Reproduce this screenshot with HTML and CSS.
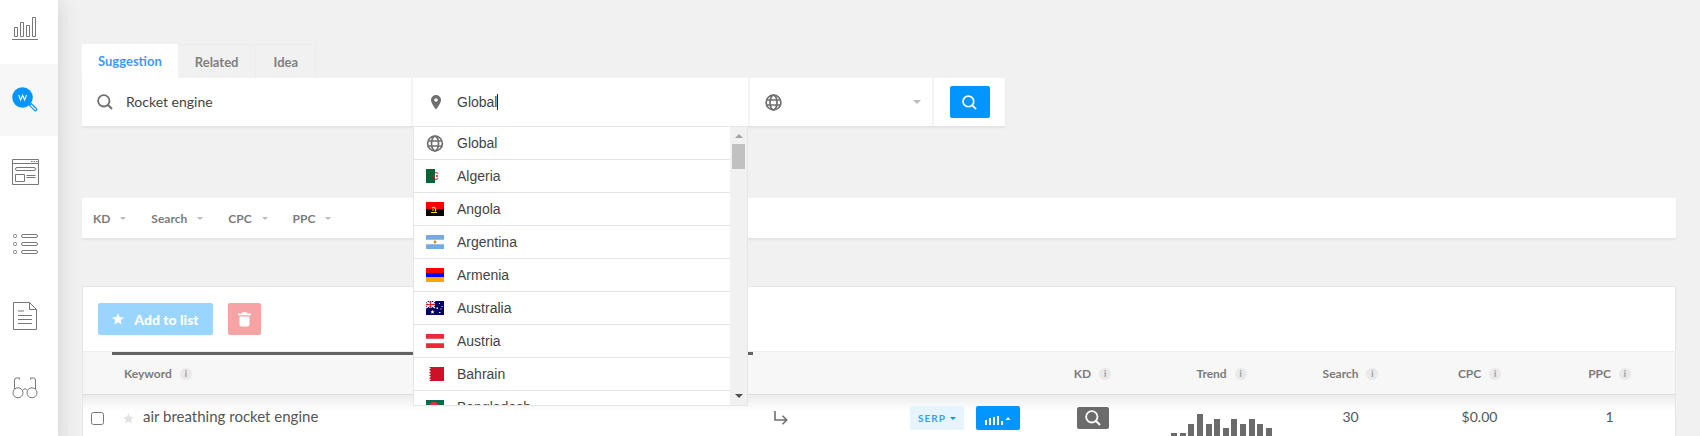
FILE: index.html
```html
<!DOCTYPE html>
<html lang="en">
<head>
  <meta charset="UTF-8">
  <meta name="viewport" content="width=device-width, initial-scale=1">
  <title>Keyword Finder</title>
  <link rel="stylesheet" href="styles.css">
</head>
<body>
  <svg class="defs" aria-hidden="true">
    <symbol id="magnifier" viewBox="0 0 16 16">
      <circle cx="6.8" cy="6.8" r="5.7" fill="none" stroke="currentColor" stroke-width="1.8"/>
      <path d="M10.8 10.8L15 15" stroke="currentColor" stroke-width="2"/>
    </symbol>
    <symbol id="globe" viewBox="0 0 17 17">
      <g fill="none" stroke="currentColor" stroke-width="1.7">
        <circle cx="8.5" cy="8.5" r="7.4"/>
        <ellipse cx="8.5" cy="8.5" rx="3.5" ry="7.4"/>
        <path d="M1.6 6h13.8M1.6 11h13.8"/>
      </g>
    </symbol>
    <symbol id="star" viewBox="0 0 12 12">
      <path d="M6 0l1.7 4 4.3.4-3.3 2.8 1 4.3L6 9.2l-3.7 2.3 1-4.3L0 4.4 4.3 4z" fill="currentColor"/>
    </symbol>
  </svg>

  <div class="app">
    <nav class="sidebar">
      <a class="nav-item" href="#" aria-label="Rank tracker">
        <svg width="26" height="26" viewBox="0 0 26 26" fill="none" stroke="#777">
          <path d="M0 24.5h26M2.5 12.500h3v9h-3zM8.500 7.500h3v14h-3zM14.500 10.500h3v11h-3zM20.500 2.500h3v19h-3z"/>
        </svg>
      </a>
      <a class="nav-item active" href="#" aria-label="Keyword finder">
        <svg width="26" height="26" viewBox="0 0 26 26">
          <path d="M17.500 18.300l1.800-1.800 5 5q.9.900 0 1.800t-1.800 0z" fill="none" stroke="#0095ff" stroke-width="1.200"/>
          <circle cx="10.500" cy="10.500" r="10.300" fill="#0095ff"/>
          <path d="M6.700 8l1.900 5 2-4.800 2 4.800 1.900-5" fill="none" stroke="#fff" stroke-width="1.100"/>
        </svg>
      </a>
      <a class="nav-item" href="#" aria-label="Web audit">
        <svg width="27" height="26" viewBox="0 0 27 26" fill="none" stroke="#777">
          <path d="M.5.5h26v25H.5zM.5 4.500h26M3.500 15.500h9v7h-9zM14.500 16.500h9M14.500 18.500h9"/>
          <rect x="3.500" y="8.500" width="20" height="3" rx="1.500"/>
          <path d="M19 2.500h1.500M21.500 2.500H23M24 2.500h1.500"/>
        </svg>
      </a>
      <a class="nav-item" href="#" aria-label="Keyword lists">
        <svg width="26" height="22" viewBox="0 0 26 22" fill="none" stroke="#777">
          <rect x="1.500" y="1.500" width="3" height="3" rx="1"/>
          <rect x="1.500" y="9.500" width="3" height="3" rx="1"/>
          <rect x="1.500" y="17.500" width="3" height="3" rx="1"/>
          <rect x="9.500" y="1.500" width="16" height="3" rx="1.500"/>
          <rect x="9.500" y="9.500" width="16" height="3" rx="1.500"/>
          <rect x="9.500" y="17.500" width="16" height="3" rx="1.500"/>
        </svg>
      </a>
      <a class="nav-item" href="#" aria-label="Reports">
        <svg width="26" height="28" viewBox="0 0 26 28" fill="none" stroke="#777">
          <path d="M1.500.5h16l7 7v20h-23zM17.500.5v7h7M6 9h6M6 13.500h14M6 17.500h14M6 21.500h14"/>
        </svg>
      </a>
      <a class="nav-item" href="#" aria-label="Competitors">
        <svg width="26" height="22" viewBox="0 0 26 22" fill="none" stroke="#777">
          <circle cx="6" cy="15.800" r="5"/>
          <circle cx="20" cy="15.800" r="5"/>
          <path d="M10.500 13.500q2.500-3.500 5 0M2.500 12V3q0-2 2-2h3v1.500M23.500 12V3q0-2-2-2h-3v1.500"/>
        </svg>
      </a>
    </nav>

    <main class="main">
      <div class="tabs">
        <button class="tab active">Suggestion</button>
        <button class="tab">Related</button>
        <button class="tab">Idea</button>
      </div>

      <form class="search-bar">
        <label class="field field-keyword">
          <svg class="icon" width="16" height="16"><use href="#magnifier"/></svg>
          <input type="text" value="Rocket engine" aria-label="Keyword">
        </label>
        <div class="field field-location">
          <label class="field-label">
            <svg class="icon" width="18" height="16" viewBox="0 0 18 16">
              <path d="M10 1a5 5 0 0 0-5 5c0 3.500 5 9.500 5 9.500s5-6 5-9.500a5 5 0 0 0-5-5zm0 3.200a1.800 1.800 0 1 1 0 3.600 1.800 1.800 0 0 1 0-3.600z" fill="#6f6f6f"/>
            </svg>
            <input type="text" value="Global" aria-label="Location">
          </label>
          <span class="caret"></span>
          <div class="dropdown">
            <ul class="countries">
              <li><svg class="globe" width="18" height="17"><use href="#globe"/></svg>Global</li>
              <li>
                <svg width="18" height="14"><path d="M0 0h9v14H0z" fill="#063"/><path d="M12.300 4.500a3.300 3.300 0 1 0 0 5" fill="none" stroke="#d21034"/><circle cx="11" cy="7" r="1" fill="#d21034"/></svg>
                Algeria
              </li>
              <li>
                <svg width="18" height="14"><path d="M0 0h18v7H0z" fill="#f00"/><path d="M0 7h18v7H0z"/><path d="M5 10.500h6M6 6a2.200 2.200 0 1 1 3 3.500M6 8h2" fill="none" stroke="#fd0" stroke-width="1.200"/></svg>
                Angola
              </li>
              <li>
                <svg width="18" height="14"><path d="M0 0h18v4.700H0zM0 9.300h18V14H0z" fill="#74acdf"/><circle cx="9" cy="7" r="1.400" fill="#c68a2c"/></svg>
                Argentina
              </li>
              <li>
                <svg width="18" height="14"><path d="M0 0h18v5H0z" fill="#f00"/><path d="M0 5h18v4H0z" fill="#00f"/><path d="M0 9h18v5H0z" fill="#ffa500"/></svg>
                Armenia
              </li>
              <li>
                <svg width="18" height="14"><path d="M0 0h18v14H0z" fill="#006"/><path d="M0 0l9 7M9 0L0 7" stroke="#fff" stroke-width="1.400"/><path d="M4.500 0v7M0 3.500h9" stroke="#fff" stroke-width="2.400"/><path d="M4.500 0v7M0 3.500h9" stroke="#d22" stroke-width="1.200"/><path d="M6.500 9l.7 1.200 1.300.3-1 .8.200 1.500-1.200-.7-1.200.7.200-1.500-1-.8 1.300-.3zM13 2h1v1h-1zM10.500 6.500h1.500V8h-1.500zM15.500 5h1v1h-1zM13 11h1.500v1H13zM14.500 7.500h1v1h-1z" fill="#fff"/></svg>
                Australia
              </li>
              <li>
                <svg width="18" height="14"><path d="M0 0h18v4.700H0zM0 9.300h18V14H0z" fill="#ed2939"/></svg>
                Austria
              </li>
              <li>
                <svg width="18" height="14"><path d="M18 0H3l2 1.400-2 1.400 2 1.400-2 1.400L5 7 3 8.400l2 1.400-2 1.400 2 1.400L3 14h15z" fill="#ce1126"/></svg>
                Bahrain
              </li>
              <li>
                <svg width="18" height="14"><path d="M0 0h18v14H0z" fill="#006a4e"/><circle cx="8" cy="7" r="5" fill="#f42a41"/></svg>
                Bangladesh
              </li>
            </ul>
            <div class="scrollbar">
              <span class="arrow-up"></span>
              <span class="thumb"></span>
              <span class="arrow-down"></span>
            </div>
          </div>
        </div>
        <label class="field field-language">
          <svg class="icon" width="17" height="17"><use href="#globe"/></svg>
          <select aria-label="Language"><option></option></select>
          <span class="chevron"></span>
        </label>
        <div class="field field-submit">
          <button class="btn-search" type="button" aria-label="Search">
            <svg width="15" height="15"><use href="#magnifier"/></svg>
          </button>
        </div>
      </form>

      <div class="filters">
        <button class="filter">KD <span class="chevron"></span></button>
        <button class="filter">Search <span class="chevron"></span></button>
        <button class="filter">CPC <span class="chevron"></span></button>
        <button class="filter">PPC <span class="chevron"></span></button>
      </div>

      <section class="panel">
        <div class="toolbar">
          <button class="btn-add"><svg width="12" height="12"><use href="#star"/></svg>Add to list</button>
          <button class="btn-delete" aria-label="Delete">
            <svg width="13" height="15" viewBox="0 0 13 15" fill="#fff"><path d="M0 1.500h3.500L4.500.3h4l1 1.200H13v1.700H0zM1.500 4.500h10v8.300q0 1.700-1.700 1.700H3.200q-1.700 0-1.700-1.700z"/></svg>
          </button>
        </div>
        <div class="results">
          <div class="progress"></div>
          <table>
            <thead>
              <tr>
                <th class="col-keyword">Keyword <i class="info">i</i></th>
                <th>KD <i class="info">i</i></th>
                <th>Trend <i class="info">i</i></th>
                <th>Search <i class="info">i</i></th>
                <th>CPC <i class="info">i</i></th>
                <th class="col-last">PPC <i class="info">i</i></th>
              </tr>
            </thead>
            <tbody>
              <tr>
                <td class="col-keyword">
                  <div class="keyword">
                    <input type="checkbox" aria-label="Select keyword">
                    <svg class="fav" width="11" height="11"><use href="#star"/></svg>
                    <span class="keyword-text">air breathing rocket engine</span>
                    <svg class="open" width="14" height="14" viewBox="0 0 14 14" fill="none" stroke="#6f6f6f" stroke-width="1.600"><path d="M1 0v9h11.500M8.500 4.800L12.700 9l-4.200 4.200"/></svg>
                    <button class="btn-serp">SERP <span class="chevron"></span></button>
                    <button class="btn-chart" aria-label="Trend chart">
                      <svg width="27" height="16" viewBox="0 0 27 16" fill="#fff"><path d="M0 10h2v5H0zM4 8h2v7H4zM8 7h2v8H8zM12 6h2v9h-2zM16 11h2v4h-2zM20.500 10l2.500-3 2.500 3z"/></svg>
                    </button>
                  </div>
                </td>
                <td>
                  <button class="btn-kd" aria-label="Check difficulty"><svg width="16" height="16"><use href="#magnifier"/></svg></button>
                </td>
                <td>
                  <div class="trend">
                    <span style="height: 9px"></span>
                    <span style="height: 9px"></span>
                    <span style="height: 18px"></span>
                    <span style="height: 28px"></span>
                    <span style="height: 18px"></span>
                    <span style="height: 23px"></span>
                    <span style="height: 14px"></span>
                    <span style="height: 23px"></span>
                    <span style="height: 18px"></span>
                    <span style="height: 23px"></span>
                    <span style="height: 18px"></span>
                    <span style="height: 14px"></span>
                  </div>
                </td>
                <td>30</td>
                <td>$0.00</td>
                <td>1</td>
              </tr>
            </tbody>
          </table>
        </div>
      </section>
    </main>
  </div>
</body>
</html>
```

FILE: styles.css
```css
* {
  box-sizing: border-box;
  margin: 0;
  padding: 0;
}

body {
  height: 100vh;
  overflow: hidden;
  background: #f1f1f1;
  font-family: Lato, sans-serif;
  font-size: 14px;
  color: #555;
}

button,
input,
select {
  font-family: inherit;
  border: none;
  outline: none;
  background: none;
}

button {
  cursor: pointer;
}

svg {
  display: block;
  flex-shrink: 0;
}

.defs {
  position: absolute;
  width: 0;
  height: 0;
}

.app {
  display: flex;
  min-height: 100vh;
}

/* Sidebar */
.sidebar {
  flex: 0 0 58px;
  background: #fff;
  box-shadow: 0 0 24px rgba(0, 0, 0, 0.14);
}

.nav-item {
  display: flex;
  align-items: center;
  height: 72px;
  padding-left: 12px;
}

.nav-item:first-child {
  height: 64px;
  padding-bottom: 8px;
}

.nav-item.active {
  background: #f7f7f7;
}

.main {
  flex: 1;
  min-width: 0;
  padding: 44px 24px 0;
}

/* Tabs */
.tabs {
  display: flex;
}

.tab {
  height: 34px;
  padding: 0 17px;
  border: 1px solid #ececec;
  border-left: none;
  border-bottom: none;
  font-size: 13px;
  font-weight: 700;
  color: #808080;
}

.tab.active {
  padding: 0 16px;
  border: none;
  border-radius: 2px 0 0 0;
  background: #fff;
  color: #3f99ff;
}

/* Search bar */
.search-bar {
  display: grid;
  grid-template-columns: 329fr 335fr 182fr 71fr;
  gap: 2px;
  width: 923px;
  max-width: 100%;
  background: #f4f4f4;
  box-shadow: 0 2px 2px rgba(0, 0, 0, 0.06);
}

.field {
  display: flex;
  align-items: center;
  min-width: 0;
  height: 48px;
  background: #fff;
}

.icon {
  color: #6f6f6f;
}

.field input {
  flex: 1;
  min-width: 0;
  height: 48px;
  padding-bottom: 1px;
  font-size: 14px;
  color: #444;
}

.field-keyword {
  padding-left: 15px;
  gap: 13px;
}

.field-location {
  position: relative;
}

.field-label {
  display: flex;
  align-items: center;
  gap: 13px;
  flex: 1;
  padding-left: 13px;
}

.field-location input,
.countries {
  font-family: "Liberation Sans", Arial, sans-serif;
}

.caret {
  position: absolute;
  left: 84px;
  top: 16px;
  width: 1px;
  height: 16px;
  background: #222;
}

.field-language {
  padding: 0 11px 0 15px;
}

.field-language select {
  flex: 1;
  height: 48px;
  appearance: none;
}

.field-submit {
  justify-content: center;
}

.btn-search {
  display: flex;
  align-items: center;
  justify-content: center;
  width: 40px;
  height: 32px;
  border-radius: 2px;
  background: #0095ff;
  color: #fff;
}

.chevron {
  display: inline-block;
  border: 4px solid transparent;
  border-top: 4px solid #bbb;
  border-bottom: none;
}

/* Country list */
.dropdown {
  position: absolute;
  z-index: 10;
  left: 0;
  right: 0;
  top: 48px;
  display: flex;
  height: 280px;
  border: 1px solid #e6e6e6;
  background: #fff;
  overflow: hidden;
}

.countries {
  flex: 1;
  list-style: none;
}

.countries li {
  display: flex;
  align-items: center;
  gap: 13px;
  height: 33px;
  padding-left: 12px;
  border-bottom: 1px solid #e4e4e4;
  font-size: 14px;
  color: #444;
}

.globe {
  color: #6f6f6f;
}

.scrollbar {
  display: flex;
  flex-direction: column;
  align-items: center;
  width: 17px;
  padding: 7px 0;
  background: #f1f1f1;
}

.arrow-up {
  border: 4px solid transparent;
  border-top: none;
  border-bottom-color: #a3a3a3;
}

.thumb {
  width: 13px;
  height: 25px;
  margin-top: 6px;
  background: #c1c1c1;
}

.arrow-down {
  margin-top: auto;
  border: 4px solid transparent;
  border-bottom: none;
  border-top-color: #505050;
}

/* Filters */
.filters {
  display: flex;
  gap: 25px;
  height: 40px;
  margin-top: 72px;
  padding-left: 11px;
  background: #fff;
  box-shadow: 0 2px 2px rgba(0, 0, 0, 0.06);
}

.filter {
  display: flex;
  align-items: center;
  gap: 10px;
  font-size: 12px;
  font-weight: 700;
  color: #7b7b7b;
}

.filter .chevron,
.btn-serp .chevron {
  border-width: 3px;
  border-bottom: none;
}

/* Results */
.panel {
  margin-top: 48px;
  border: 1px solid #e6e6e6;
  background: #fff;
}

.toolbar {
  display: flex;
  gap: 15px;
  padding: 16px 15px;
}

.btn-add {
  display: flex;
  align-items: center;
  justify-content: center;
  gap: 10px;
  width: 115px;
  height: 32px;
  border-radius: 2px;
  background: #99d5ff;
  font-size: 14px;
  font-weight: 900;
  color: #fff;
}

.btn-delete {
  display: flex;
  align-items: center;
  justify-content: center;
  width: 33px;
  height: 32px;
  border-radius: 2px;
  background: #f5a3a3;
}

.results {
  position: relative;
}

.progress {
  position: absolute;
  left: 29px;
  top: 1px;
  width: 641px;
  height: 3px;
  background: #636363;
}

table {
  width: 100%;
  table-layout: fixed;
  border-spacing: 0;
}

th {
  width: 129px;
  height: 44px;
  border-top: 1px solid #ececec;
  border-bottom: 1px solid #dedede;
  background: #f7f7f7;
  font-size: 12px;
  font-weight: 700;
  text-align: center;
  color: #7b7b7b;
}

th.col-keyword {
  width: auto;
  padding-left: 41px;
  text-align: left;
}

th.col-last {
  width: 131px;
}

.info {
  display: inline-block;
  width: 12px;
  height: 12px;
  margin-left: 5px;
  border-radius: 50%;
  background: #e9e9e9;
  font-size: 9px;
  font-style: normal;
  line-height: 12px;
  text-align: center;
  vertical-align: 1px;
  color: #999;
}

td {
  height: 56px;
  padding-top: 11px;
  vertical-align: top;
  text-align: center;
  line-height: 22px;
  color: #555;
}

tbody tr {
  background: linear-gradient(#ececec, #fff 16px);
}

.keyword {
  display: flex;
  align-items: center;
  height: 24px;
  padding: 0 8px;
}

.keyword input {
  width: 13px;
  height: 13px;
}

.fav {
  margin-left: 19px;
  color: #e2e2e2;
}

.keyword-text {
  flex: 1;
  margin-left: 9px;
  padding-bottom: 4px;
  font-size: 15px;
  text-align: left;
}

.open {
  margin-right: 122px;
}

.btn-serp {
  display: flex;
  align-items: center;
  justify-content: center;
  gap: 4px;
  width: 54px;
  height: 24px;
  margin-right: 12px;
  border-radius: 2px;
  background: #e5f4ff;
  font-size: 10px;
  font-weight: 700;
  letter-spacing: 1px;
  color: #3f99ff;
}

.btn-serp .chevron {
  border-top-color: #0095ff;
}

.btn-chart {
  display: flex;
  align-items: center;
  justify-content: center;
  width: 44px;
  height: 24px;
  border-radius: 2px;
  background: #0095ff;
}

.btn-kd {
  display: inline-flex;
  align-items: center;
  justify-content: center;
  width: 32px;
  height: 22px;
  margin-top: 1px;
  border-radius: 2px;
  background: #6b6b6b;
  color: #fff;
}

.trend {
  display: flex;
  align-items: flex-end;
  justify-content: space-between;
  width: 101px;
  height: 36px;
  margin: 0 auto;
}

.trend span {
  width: 6px;
  background: #6b6b6b;
}
```
